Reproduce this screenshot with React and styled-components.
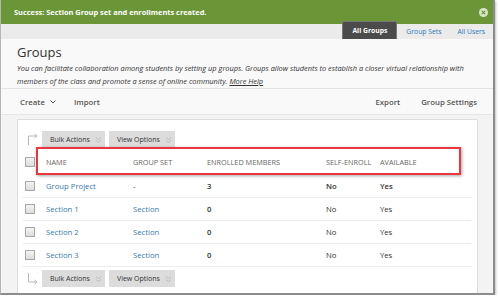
import React from "react";
import styled, { createGlobalStyle } from "styled-components";

const Global = createGlobalStyle`
  body {
    margin: 0;
    background: #ffffff;
    font-family: "Open Sans", "DejaVu Sans", sans-serif;
  }
`

const Frame = styled.div`
  width: 492px;
  height: 293px;
  border-left: 1px solid #b5b5b5;
  border-right: 2px solid #8c8c8c;
  border-bottom: 2px solid #8c8c8c;
  box-shadow: 1px 1px 2px rgba(0, 0, 0, 0.25);
  background: #f3f3f3;
  overflow: hidden;
  display: flex;
  flex-direction: column;
`

const Banner = styled.div`
  height: 24px;
  flex: none;
  background: #6a9638;
  color: #ffffff;
  font-size: 7.4px;
  font-weight: 700;
  display: flex;
  align-items: center;
  justify-content: space-between;
  padding: 0 5px 0 13px;
`

const CloseBtn = styled.span`
  width: 9px;
  height: 9px;
  border-radius: 50%;
  background: #d6e4c6;
  display: flex;
  align-items: center;
  justify-content: center;
`

const NavStrip = styled.div`
  height: 15px;
  flex: none;
  background: #ebebeb;
  display: flex;
  justify-content: flex-end;
  align-items: stretch;
  padding-right: 1px;
`

const Tab = styled.div`
  position: relative;
  display: flex;
  align-items: center;
  padding: 0 ${(p) => (p.$active ? "9px" : "7px")};
  margin-top: ${(p) => (p.$active ? "-3px" : "0")};
  margin-left: ${(p) => (p.$active ? "0" : "2px")};
  background: ${(p) => (p.$active ? "#4b4b4b" : "transparent")};
  color: ${(p) => (p.$active ? "#ffffff" : "#2f78b3")};
  font-weight: ${(p) => (p.$active ? 700 : 400)};
  font-size: 6.8px;
  border: ${(p) => (p.$active ? "1px solid #777" : "none")};
  border-bottom: none;
`

const Header = styled.div`
  height: 50px;
  flex: none;
  background: #f9f9f9;
  padding: 3px 20px 0 16px;
  box-sizing: border-box;
  border-bottom: 1px solid #e4e4e4;
`

const Title = styled.h1`
  margin: 0;
  font-size: 13px;
  font-weight: 400;
  color: #333333;
  line-height: 20px;
`

const IntroLine = styled.div`
  font-size: 7.4px;
  font-style: italic;
  color: #333333;
  line-height: 13px;
  white-space: nowrap;
`

const HelpLink = styled.span`
  text-decoration: underline;
  text-underline-offset: 1px;
  margin-left: 2px;
`

const Toolbar = styled.div`
  height: 25px;
  flex: none;
  background: #f9f9f9;
  border-bottom: 1px solid #e6e6e6;
  display: flex;
  align-items: center;
  padding: 0 16px 0 19px;
  font-size: 7.8px;
  font-weight: 600;
  color: #555555;
`

const ToolItem = styled.span`
  display: flex;
  align-items: center;
  gap: 5px;
  margin-right: ${(p) => p.$mr || "0"};
  margin-left: ${(p) => p.$ml || "0"};
`

const Body = styled.div`
  flex: 1;
  padding: 4px 15px 0 16px;
  display: flex;
`

const Panel = styled.div`
  flex: 1;
  background: #ffffff;
  border: 1px solid #dedede;
  border-bottom: none;
  padding: 11px 6px 0 5px;
`

const ActionRow = styled.div`
  display: flex;
  align-items: center;
  gap: 4px;
  height: 17px;
  margin-top: ${(p) => p.$mt || "0"};
`

const ArrowSlot = styled.span`
  width: 16px;
  display: flex;
  justify-content: flex-end;
  margin-right: -1px;
`

const GreyBtn = styled.span`
  height: 17px;
  width: ${(p) => p.$w};
  box-sizing: border-box;
  background: #dcdcdc;
  color: #333333;
  font-size: 7px;
  display: flex;
  align-items: center;
  padding-left: 8px;
  gap: 5px;
`

const Row = styled.div`
  position: relative;
  display: grid;
  grid-template-columns: 20px 87px 74px 119px 54px 1fr;
  align-items: center;
  height: ${(p) => (p.$head ? "27px" : "23px")};
  border-bottom: ${(p) => (p.$head ? "none" : "1px solid #ececec")};
  box-sizing: border-box;
  font-size: ${(p) => (p.$head ? "7.3px" : "7.7px")};
  color: ${(p) => (p.$head ? "#666666" : "#333333")};
`

const Cell = styled.span`
  padding-left: 3px;
  color: ${(p) => (p.$link ? "#3579b4" : "inherit")};
  font-weight: ${(p) => (p.$bold ? 600 : 400)};
`

const Check = styled.span`
  width: 8px;
  height: 8px;
  margin-left: 2px;
  border: 1px solid #a8a8a8;
  background: linear-gradient(#f4f4f4, #dcdcdc);
`

const Callout = styled.div`
  position: absolute;
  left: 13px;
  right: 10px;
  top: -1px;
  bottom: 0;
  border: 2px solid #e8373d;
  box-shadow: 1px 1px 3px rgba(0, 0, 0, 0.35);
  pointer-events: none;
`

const Chevrons = () => (
  <svg width="7" height="8" viewBox="0 0 7 8">
    <path d="M1 1.5 L3.5 3.5 L6 1.5 M1 4.5 L3.5 6.5 L6 4.5" fill="none" stroke="#bdbdbd" strokeWidth="1" />
  </svg>
)

const TurnArrow = ({ up }) => (
  <svg width="12" height="12" viewBox="0 0 12 12">
    {up ? (
      <path d="M1.5 11 V2 H10 M7.5 0 L10 2 L7.5 4" fill="none" stroke="#b8b8b8" strokeWidth="1" />
    ) : (
      <path d="M1.5 0 V9 H10 M7.5 7 L10 9 L7.5 11" fill="none" stroke="#b8b8b8" strokeWidth="1" />
    )}
  </svg>
)

const groups = [
  { name: "Group Project", set: "-", enrolled: "3", self: "No", avail: "Yes", strong: true },
  { name: "Section 1", set: "Section", enrolled: "0", self: "No", avail: "Yes" },
  { name: "Section 2", set: "Section", enrolled: "0", self: "No", avail: "Yes" },
  { name: "Section 3", set: "Section", enrolled: "0", self: "No", avail: "Yes" },
]

function Actions({ up, mt }) {
  return (
    <ActionRow $mt={mt}>
      <ArrowSlot>
        <TurnArrow up={up} />
      </ArrowSlot>
      <GreyBtn $w="63px">Bulk Actions <Chevrons /></GreyBtn>
      <GreyBtn $w="66px">View Options <Chevrons /></GreyBtn>
    </ActionRow>
  )
}

function App() {
  return (
    <Frame>
      <Global />
      <Banner>
        Success: Section Group set and enrollments created.
        <CloseBtn>
          <svg width="5" height="5" viewBox="0 0 5 5">
            <path d="M0.8 0.8 L4.2 4.2 M4.2 0.8 L0.8 4.2" stroke="#6a9638" strokeWidth="1.2" />
          </svg>
        </CloseBtn>
      </Banner>
      <NavStrip>
        <Tab $active>All Groups</Tab>
        <Tab>Group Sets</Tab>
        <Tab>All Users</Tab>
      </NavStrip>
      <Header>
        <Title>Groups</Title>
        <IntroLine>
          You can facilitate collaboration among students by setting up groups. Groups allow students to establish a closer virtual relationship with
        </IntroLine>
        <IntroLine>
          <span>members of the class and promote a sense of online community.</span>
          <HelpLink>More Help</HelpLink>
        </IntroLine>
      </Header>
      <Toolbar>
        <ToolItem $mr="18px">
          Create
          <svg width="6" height="4" viewBox="0 0 6 4">
            <path d="M0.5 0.5 L3 3 L5.5 0.5" fill="none" stroke="#555" strokeWidth="1" />
          </svg>
        </ToolItem>
        <ToolItem>Import</ToolItem>
        <ToolItem $ml="auto" $mr="21px">Export</ToolItem>
        <ToolItem>Group Settings</ToolItem>
      </Toolbar>
      <Body>
        <Panel>
          <Actions up />
          <Row $head>
            <Check />
            <Cell>NAME</Cell>
            <Cell>GROUP SET</Cell>
            <Cell>ENROLLED MEMBERS</Cell>
            <Cell>SELF-ENROLL</Cell>
            <Cell>AVAILABLE</Cell>
            <Callout />
          </Row>
          {groups.map((g) => (
            <Row key={g.name}>
              <Check />
              <Cell $link>{g.name}</Cell>
              <Cell $link={g.set !== "-"}>{g.set}</Cell>
              <Cell $bold>{g.enrolled}</Cell>
              <Cell $bold={g.strong}>{g.self}</Cell>
              <Cell $bold={g.strong}>{g.avail}</Cell>
            </Row>
          ))}
          <Actions mt="3px" />
        </Panel>
      </Body>
    </Frame>
  );
}

export default App;
